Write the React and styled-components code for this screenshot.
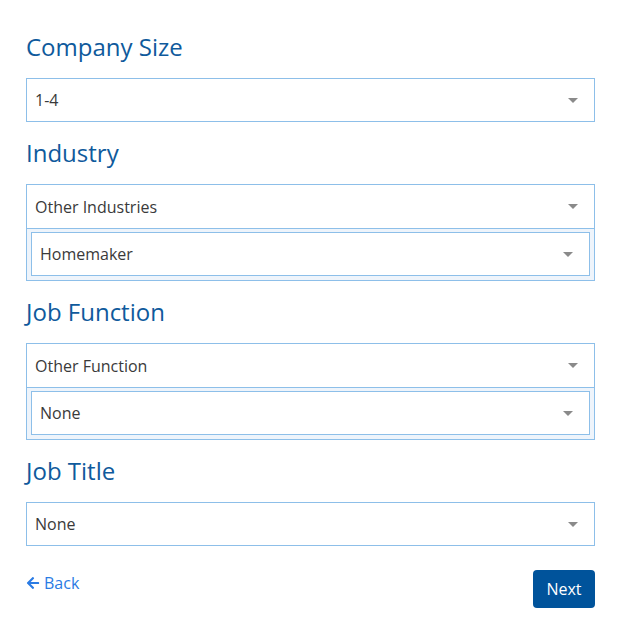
import React from "react";
import styled, { createGlobalStyle } from "styled-components";
import { FaArrowLeft } from "react-icons/fa";

const GlobalStyle = createGlobalStyle`
  body {
    margin: 0;
    background: #fff;
    font-family: "Open Sans", "Liberation Sans", sans-serif;
  }
`;

const Page = styled.div`
  padding: 32px 29px 20px 26px;
`;

const Heading = styled.h2`
  margin: 0 0 16px;
  font-size: 24px;
  line-height: 30px;
  font-weight: 400;
  color: #0f5a9c;
`;

const Field = styled.div`
  display: flex;
  align-items: center;
  justify-content: space-between;
  height: ${(p) => (p.$bare ? "43px" : "42px")};
  padding: 0 16px 0 8px;
  background: #fff;
  border: ${(p) => (p.$bare ? "none" : "1px solid #8dbfe9")};
  border-bottom: 1px solid #8dbfe9;
  font-size: 16px;
  color: #3a3a3a;
`;

const Caret = styled.span`
  width: 0;
  height: 0;
  border-left: 5px solid transparent;
  border-right: 5px solid transparent;
  border-top: 5px solid #8a8a8a;
`;

const Group = styled.div`
  border: 1px solid #8dbfe9;
  background: #eef4fb;
`;

const Nested = styled.div`
  padding: 3px 4px 4px;
`;

const Section = styled.div`
  margin-bottom: 16px;
`;

const Footer = styled.div`
  display: flex;
  justify-content: space-between;
  align-items: flex-start;
  margin-top: 24px;
`;

const BackLink = styled.a`
  display: flex;
  align-items: center;
  gap: 4px;
  padding-top: 2px;
  font-size: 16px;
  color: #2a7be4;
  text-decoration: none;
  svg {
    font-size: 14px;
  }
`;

const NextButton = styled.button`
  width: 62px;
  height: 38px;
  border: none;
  border-radius: 4px;
  background: #00539b;
  color: #fff;
  font-family: inherit;
  font-size: 16px;
`;

const Select = ({ value, bare }) => (
  <Field $bare={bare}>
    <span>{value}</span>
    <Caret />
  </Field>
);

export default function App() {
  return (
    <>
      <GlobalStyle />
      <Page>
        <Heading>Company Size</Heading>
        <Section>
          <Select value="1-4" />
        </Section>

        <Heading>Industry</Heading>
        <Section>
          <Group>
            <Select value="Other Industries" bare />
            <Nested>
              <Select value="Homemaker" />
            </Nested>
          </Group>
        </Section>

        <Heading>Job Function</Heading>
        <Section>
          <Group>
            <Select value="Other Function" bare />
            <Nested>
              <Select value="None" />
            </Nested>
          </Group>
        </Section>

        <Heading>Job Title</Heading>
        <Select value="None" />

        <Footer>
          <BackLink href="#">
            <FaArrowLeft />
            Back
          </BackLink>
          <NextButton>Next</NextButton>
        </Footer>
      </Page>
    </>
  );
}
